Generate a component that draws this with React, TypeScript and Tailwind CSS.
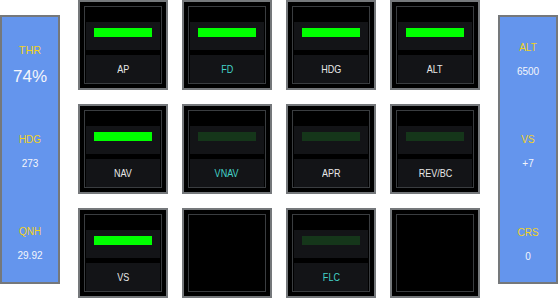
import React from "react";

type Btn = { label?: string; on?: boolean; cyan?: boolean; empty?: boolean };

const buttons: Btn[] = [
  { label: "AP", on: true },
  { label: "FD", on: true, cyan: true },
  { label: "HDG", on: true },
  { label: "ALT", on: true },
  { label: "NAV", on: true },
  { label: "VNAV", cyan: true },
  { label: "APR" },
  { label: "REV/BC" },
  { label: "VS", on: true },
  { empty: true },
  { label: "FLC", cyan: true },
  { empty: true },
];

function Key({ b }: { b: Btn }) {
  return (
    <div className="w-[90px] h-[90px] border-2 border-[#75787b] bg-black p-[4px]">
      <div className="w-full h-full border border-[#3a3d40] bg-black flex flex-col">
        {!b.empty && (
          <>
            <div className="h-[15px]" />
            <div className="mx-px h-[28px] bg-[#131417] px-2 pt-[6px]">
              <div className={`h-[9px] ${b.on ? "bg-[#00ff00]" : "bg-[#15361a]"}`} />
            </div>
            <div className="h-[5px]" />
            <div
              className={`mx-px h-[28px] bg-[#131417] flex items-center justify-center text-[11px] ${
                b.cyan ? "text-[#44d2c8]" : "text-[#e8e8e8]"
              }`}
            >
              <span className="inline-block scale-x-[0.82]">{b.label}</span>
            </div>
          </>
        )}
      </div>
    </div>
  );
}

type Item = { k: string; v: string; big?: boolean; mt: string };

function Side({ items }: { items: Item[] }) {
  return (
    <div className="w-[60px] h-[269px] border-2 border-[#75787b] bg-[#6495ed] flex flex-col items-center text-center">
      {items.map((it) => (
        <div key={it.k} className={`flex flex-col items-center ${it.mt}`}>
          <div className={`h-[14px] leading-[14px] text-[#f2d21e] ${it.big ? "text-[11px]" : "text-[10px]"}`}>{it.k}</div>
          {it.big ? (
            <div className="mt-[9px] h-[22px] leading-[22px] text-[17px] text-[#f4f6fb]">{it.v}</div>
          ) : (
            <div className="mt-[10px] h-[14px] leading-[14px] text-[10px] text-[#f4f6fb]">{it.v}</div>
          )}
        </div>
      ))}
    </div>
  );
}

export default function App() {
  return (
    <div
      className="w-[558px] h-[298px] bg-white flex items-center justify-between"
      style={{ fontFamily: "'Liberation Sans', Arial, sans-serif" }}
    >
      <Side
        items={[
          { k: "THR", v: "74%", big: true, mt: "mt-[26px]" },
          { k: "HDG", v: "273", mt: "mt-[45px]" },
          { k: "QNH", v: "29.92", mt: "mt-[54px]" },
        ]}
      />
      <div className="grid grid-cols-4 gap-[14px]">
        {buttons.map((b, i) => (
          <Key key={i} b={b} />
        ))}
      </div>
      <Side
        items={[
          { k: "ALT", v: "6500", mt: "mt-[24px]" },
          { k: "VS", v: "+7", mt: "mt-[54px]" },
          { k: "CRS", v: "0", mt: "mt-[55px]" },
        ]}
      />
    </div>
  );
}
